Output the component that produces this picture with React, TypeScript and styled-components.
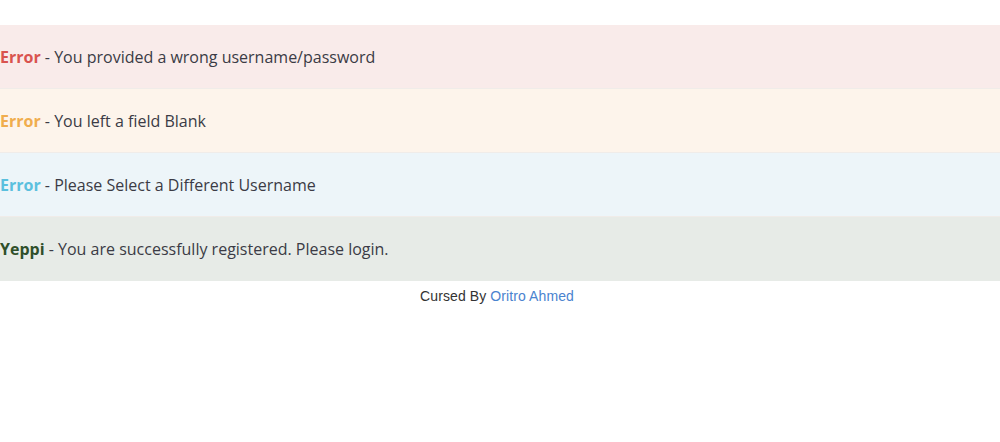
import styled, { createGlobalStyle } from "styled-components";

const GlobalStyle = createGlobalStyle`
	body {
		margin: 0;
		background: #ffffff;
		font-family: "Open Sans", sans-serif;
	}
`;

const Page = styled.div`
	padding-top: 25px;
`;

const Alert = styled.div<{ bg: string; accent: string }>`
	background: ${({ bg }) => bg};
	color: #3b3b45;
	font-size: 16px;
	line-height: 22px;
	padding: 21px 0 20px;
	border-bottom: 1px solid #f0ece9;
	& > strong {
		color: ${({ accent }) => accent};
		font-weight: 700;
	}
	&:last-of-type {
		border-bottom: none;
		padding-bottom: 21px;
	}
`;

const Footer = styled.p`
	margin: 7px 0 0;
	padding-right: 6px;
	text-align: center;
	font-family: "Liberation Sans", Arial, sans-serif;
	font-size: 14px;
	line-height: 16px;
	letter-spacing: 0.1px;
	color: #333333;
	& > a {
		color: #4a83cf;
		text-decoration: none;
	}
`;

const alerts = [
	{ bg: "#f9ebea", accent: "#d9534f", label: "Error", text: "You provided a wrong username/password" },
	{ bg: "#fdf4eb", accent: "#f0ad4e", label: "Error", text: "You left a field Blank" },
	{ bg: "#edf5f9", accent: "#5bc0de", label: "Error", text: "Please Select a Different Username" },
	{ bg: "#e7ebe7", accent: "#2f4f2a", label: "Yeppi", text: "You are successfully registered. Please login." },
];

const App = () => {
	return (
		<>
			<GlobalStyle />
			<Page>
				{alerts.map((a, i) => (
					<Alert key={i} bg={a.bg} accent={a.accent}>
						<strong>{a.label}</strong> - {a.text}
					</Alert>
				))}
				<Footer>
					Cursed By <a href="#">Oritro Ahmed</a>
				</Footer>
			</Page>
		</>
	);
};

export default App;
